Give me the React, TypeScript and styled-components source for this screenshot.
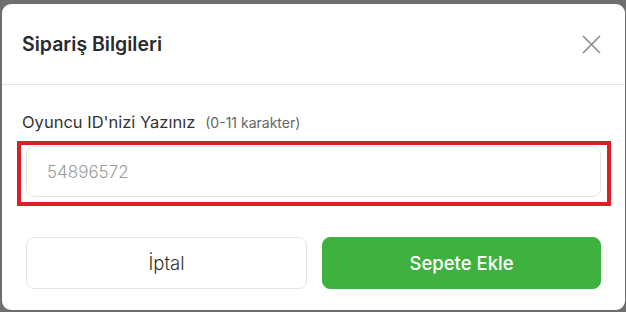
import React from "react";
import styled, { createGlobalStyle } from "styled-components";

const Global = createGlobalStyle`
  html, body {
    margin: 0;
    padding: 0;
    background: #6e6e6e;
    font-family: "Inter", "Lato", sans-serif;
  }
  * { box-sizing: border-box; }
`;

const Page = styled.div`
  width: 626px;
  height: 312px;
  padding: 4px 1px 2px 2px;
  display: flex;
`;

const Modal = styled.div`
  flex: 1;
  background: #ffffff;
  border-radius: 9px;
  display: flex;
  flex-direction: column;
  overflow: hidden;
`;

const Header = styled.div`
  height: 81px;
  border-bottom: 1px solid #e6e6e6;
  display: flex;
  align-items: center;
  justify-content: space-between;
  padding: 0 24px 0 20px;
`;

const Title = styled.h2`
  margin: 0;
  font-size: 19.5px;
  font-weight: 600;
  color: #2b2b2b;
`;

const CloseButton = styled.button`
  border: none;
  background: none;
  padding: 0;
  width: 20px;
  height: 20px;
  display: flex;
  align-items: center;
  justify-content: center;
  cursor: pointer;
`;

const Body = styled.div`
  padding: 27px 24px 21px 24px;
  display: flex;
  flex-direction: column;
`;

const Label = styled.div`
  margin-left: -4px;
  height: 20px;
  line-height: 20px;
  font-size: 16.5px;
  color: #333333;
  display: flex;
  align-items: baseline;
  gap: 10px;
`;

const Hint = styled.span`
  font-size: 14px;
  color: #666666;
`;

const Highlight = styled.div`
  margin: 9px -10px 0 -9px;
  border: 4px solid #db1f26;
  padding: 1px 6px 5px 5px;
`;

const Input = styled.input`
  width: 100%;
  height: 51px;
  border: 1px solid #e4e4e7;
  border-radius: 8px;
  padding: 0 20px;
  font-family: inherit;
  font-size: 17px;
  font-weight: 300;
  color: #333;
  outline: none;
  &::placeholder {
    color: #9a9a9a;
  }
`;

const Actions = styled.div`
  margin-top: 31px;
  display: grid;
  grid-template-columns: 281px 1fr;
  gap: 15px;
`;

const Button = styled.button<{ $primary?: boolean }>`
  height: 52px;
  border-radius: 8px;
  font-family: inherit;
  font-size: 18.5px;
  cursor: pointer;
  border: 1px solid ${(p) => (p.$primary ? "#3eb13e" : "#e4e4e7")};
  background: ${(p) => (p.$primary ? "#3eb13e" : "#ffffff")};
  color: ${(p) => (p.$primary ? "#ffffff" : "#333333")};
  font-weight: ${(p) => (p.$primary ? 500 : 300)};
`;

export default function App() {
  return (
    <>
      <Global />
      <Page>
        <Modal>
          <Header>
            <Title>Sipariş Bilgileri</Title>
            <CloseButton aria-label="Kapat">
              <svg width="19" height="19" viewBox="0 0 19 19">
                <path d="M1 1 L18 18 M18 1 L1 18" stroke="#8a8a8a" strokeWidth="1.6" fill="none" />
              </svg>
            </CloseButton>
          </Header>
          <Body>
            <Label>
              Oyuncu ID'nizi Yazınız<Hint>(0-11 karakter)</Hint>
            </Label>
            <Highlight>
              <Input placeholder="54896572" />
            </Highlight>
            <Actions>
              <Button>İptal</Button>
              <Button $primary>Sepete Ekle</Button>
            </Actions>
          </Body>
        </Modal>
      </Page>
    </>
  );
}
